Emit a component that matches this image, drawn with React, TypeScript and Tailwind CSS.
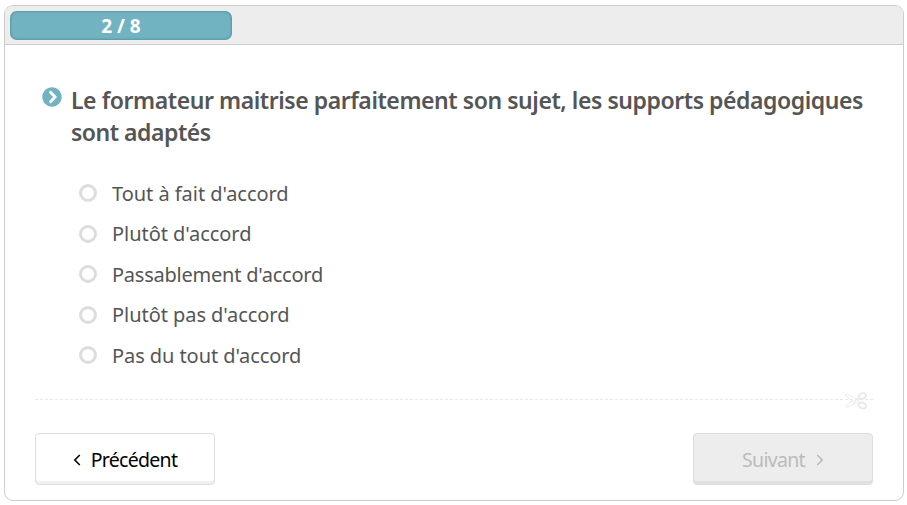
import { FaChevronCircleRight } from 'react-icons/fa'

const answers = [
  { label: "Tout à fait d'accord", tracking: 'tracking-[-0.04px]' },
  { label: "Plutôt d'accord", tracking: 'tracking-[-0.04px]' },
  { label: "Passablement d'accord", tracking: 'tracking-[-0.23px]' },
  { label: "Plutôt pas d'accord", tracking: 'tracking-[-0.05px]' },
  { label: "Pas du tout d'accord", tracking: 'tracking-[-0.07px]' },
]

function Angle({ className = '' }: { className?: string }) {
  return (
    <svg viewBox="0 0 8 12" className={`h-3 w-2 fill-none stroke-current stroke-[1.6] ${className}`}>
      <path d="M1.2 1 6.2 6l-5 5" />
    </svg>
  )
}

function Scissors() {
  return (
    <svg viewBox="0 0 1792 1792" className="h-[22px] w-[22px] -scale-x-100 fill-[#e9e9e9]">
      <path d="M960 896q26 0 45 19t19 45-19 45-45 19-45-19-19-45 19-45 45-19zm300 64l507 398q28 20 25 56-5 35-35 51l-128 64q-13 7-29 7-17 0-31-8l-690-387-110 66q-8 4-12 5 14 49 10 97-7 77-56 147.500t-132 123.500q-132 84-277 84-136 0-222-78-90-84-79-207 7-76 56-147t131-124q132-84 278-84 83 0 151 31 9-13 22-22l122-73-122-73q-13-9-22-22-68 31-151 31-146 0-278-84-82-53-131-124t-56-147q-5-59 15.500-113t63.500-93q85-79 222-79 145 0 277 84 83 52 132 123t56 148q4 48-10 97 4 1 12 5l110 66 690-387q14-8 31-8 16 0 29 7l128 64q30 16 35 51 3 36-25 56zm-681-260q46-42 21-108t-106-117q-92-59-192-59-74 0-113 36-46 42-21 108t106 117q92 59 192 59 74 0 113-36zm-85 745q81-51 106-117t-21-108q-39-36-113-36-100 0-192 59-81 51-106 117t21 108q39 36 113 36 100 0 192-59zm178-613l96 58v-11q0-36 33-56l14-8-79-44-26 26q-3 3-10 11t-12 12q-2 2-4 3.500t-3 2.500zm224 224l96 32 736-576-128-64-768 431v113l-160 96 9 8q2 2 7 6 4 4 11 12t11 12l26 26zm704 416l128-64-520-408-177 138q-2 3-13 7z" />
    </svg>
  )
}

export default function App() {
  return (
    <div className="h-[505px] bg-white pl-1 pr-[3px] pt-[5px] font-['Noto_Sans','Open_Sans',sans-serif] text-[#555]">
      <div className="h-[496px] overflow-hidden rounded-[9px] border border-[#ccc] bg-white">
        {/* Progress */}
        <div className="h-[39px] border-b border-[#ccc] bg-[#ededed] px-[5px] pt-[5px]">
          <div className="flex h-[29px] w-[222px] items-center justify-center rounded-[7px] bg-[#72b3c1] pt-px text-[19px] font-bold text-white shadow-[inset_0_0_3px_rgba(30,90,105,0.6)]">
            2 / 8
          </div>
        </div>

        {/* Question */}
        <div className="flex pl-[37px] pt-[39px]">
          <FaChevronCircleRight className="mt-[3px] h-5 w-5 shrink-0 text-[#72b3c1]" />
          <h1 className="ml-[9px] whitespace-nowrap text-[23px] font-semibold leading-8">
            <span className="tracking-[-0.435px]">Le formateur maitrise parfaitement son sujet, les supports pédagogiques</span>
            <br />
            <span className="tracking-[-0.48px]">sont adaptés</span>
          </h1>
        </div>

        {/* Answers */}
        <div className="mt-[25px] pl-[74px]">
          {answers.map((answer) => (
            <label key={answer.label} className="flex h-[40.5px] items-center">
              <span className="h-[18px] w-[18px] rounded-full border-[3px] border-[#ddd]" />
              <span className={`ml-[15px] pt-px text-[20px] ${answer.tracking}`}>{answer.label}</span>
            </label>
          ))}
        </div>

        {/* Separator */}
        <div className="relative mx-[30px] mt-[23px] border-t border-dashed border-[#e9e9e9]">
          <div className="absolute -top-[11px] right-[6px]">
            <Scissors />
          </div>
        </div>

        {/* Navigation */}
        <div className="mx-[30px] mt-[33px] flex justify-between text-[19.5px]">
          <button className="flex h-[52px] w-[180px] items-center justify-center rounded-[4px] border border-[#ddd] bg-white pt-[3px] tracking-[-0.7px] text-black shadow-[inset_0_-3px_0_#f0f0f0]">
            <Angle className="mr-[10px] -scale-x-100" />
            Précédent
          </button>
          <button className="flex h-[52px] w-[180px] items-center justify-center rounded-[4px] border border-[#ddd] bg-[#ededed] pt-[3px] tracking-[-0.7px] text-[#bbb] shadow-[inset_0_-3px_0_#e0e0e0]">
            Suivant
            <Angle className="ml-[11px]" />
          </button>
        </div>
      </div>
    </div>
  )
}
